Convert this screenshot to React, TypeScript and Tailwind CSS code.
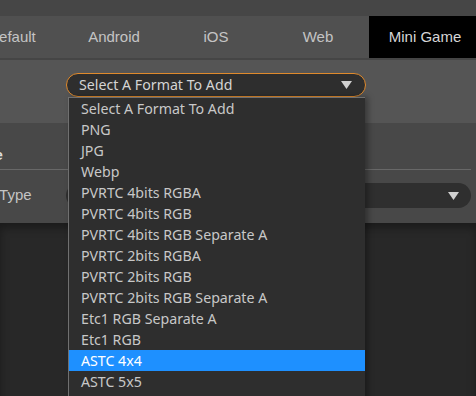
const tabs = ["Default", "Android", "iOS", "Web"]

const formats = [
  "Select A Format To Add",
  "PNG",
  "JPG",
  "Webp",
  "PVRTC 4bits RGBA",
  "PVRTC 4bits RGB",
  "PVRTC 4bits RGB Separate A",
  "PVRTC 2bits RGBA",
  "PVRTC 2bits RGB",
  "PVRTC 2bits RGB Separate A",
  "Etc1 RGB Separate A",
  "Etc1 RGB",
  "ASTC 4x4",
  "ASTC 5x5",
  "ASTC 6x6",
]

function Caret() {
  return (
    <svg width="11" height="8" viewBox="0 0 11 8" className="shrink-0">
      <path d="M0 0 L11 0 L5.5 8 Z" fill="#d0d0d0" />
    </svg>
  )
}

export default function App() {
  const selected = "ASTC 4x4"

  return (
    <div className="relative w-[476px] h-[396px] overflow-hidden bg-[#272727] font-['Liberation_Sans',Arial,sans-serif]">
      <div className="h-[16px] bg-[#464646]" />

      {/* platform tabs */}
      <div className="flex h-[42px] bg-[#505050] -ml-[39px]">
        {tabs.map((t) => (
          <div key={t} className="w-[102px] shrink-0 flex items-center justify-center text-[15px] text-[#c4c4c4]">
            {t}
          </div>
        ))}
        <div className="w-[112px] shrink-0 flex items-center justify-center bg-black text-[15px] text-[#d6d6d6]">
          Mini Game
        </div>
      </div>
      <div className="h-[2px] bg-[#454545]" />

      {/* add format */}
      <div className="h-[63px] bg-[#555555] pl-[66px] pt-[13px]">
        <div className="w-[300px] h-[24px] flex items-center justify-between pl-[12px] pr-[13px] rounded-full border border-[#e08a2c] bg-[#2e2e2e] font-['Noto_Sans',sans-serif] text-[14.2px] text-[#d4d4d4]">
          <span>Select A Format To Add</span>
          <Caret />
        </div>
      </div>

      {/* settings section */}
      <div className="h-[100px] bg-[#484848] pr-[5px]">
        <div className="h-[47px] flex items-end pb-[3px] border-b border-[#686868]">
          <span className="-ml-[38px] font-bold text-[15px] text-[#dcdcdc]">Name</span>
        </div>
        <div className="flex items-center h-[38px] pt-[13px]">
          <span className="-ml-[54px] w-[120px] shrink-0 text-[15px] text-[#c4c4c4]">Texture Type</span>
          <div className="flex-1 h-[25px] flex items-center justify-end pr-[12px] rounded-full bg-[#2f2f2f]">
            <Caret />
          </div>
        </div>
      </div>

      <div className="h-[200px] bg-[#282828] shadow-[inset_0_5px_8px_rgba(0,0,0,0.35)]" />

      {/* open format list */}
      <div className="absolute left-[68px] top-[97px] w-[297px] bg-[#2e2e2e] border-t border-l border-[#707070] shadow-[3px_0_6px_rgba(0,0,0,0.35)] font-['Noto_Sans',sans-serif] text-[14.2px]">
        {formats.map((f) => (
          <div
            key={f}
            className={
              f === selected
                ? "h-[21px] flex items-center pl-[12px] bg-[#1e90ff] text-white"
                : "h-[21px] flex items-center pl-[12px] text-[#c8c8c8]"
            }
          >
            {f}
          </div>
        ))}
      </div>
    </div>
  )
}
